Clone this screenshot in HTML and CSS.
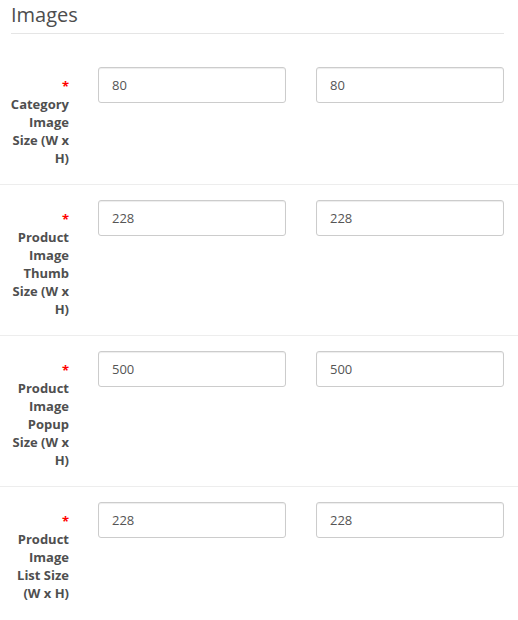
FILE: index.html
```html
<!DOCTYPE html>
<html>
<head>
<meta charset="utf-8">
<link rel="stylesheet" href="styles.css">
</head>
<body>
<fieldset class="fs">
  <legend class="legend">Images</legend>
  <div class="row first">
    <label class="lbl"><span class="req">*</span>Category<br>Image<br>Size (W x<br>H)</label>
    <input class="inp" type="text" value="80">
    <input class="inp" type="text" value="80">
  </div>
  <div class="row">
    <label class="lbl"><span class="req">*</span>Product<br>Image<br>Thumb<br>Size (W x<br>H)</label>
    <input class="inp" type="text" value="228">
    <input class="inp" type="text" value="228">
  </div>
  <div class="row">
    <label class="lbl"><span class="req">*</span>Product<br>Image<br>Popup<br>Size (W x<br>H)</label>
    <input class="inp" type="text" value="500">
    <input class="inp" type="text" value="500">
  </div>
  <div class="row">
    <label class="lbl"><span class="req">*</span>Product<br>Image<br>List Size<br>(W x H)</label>
    <input class="inp" type="text" value="228">
    <input class="inp" type="text" value="228">
  </div>
</fieldset>
</body>
</html>
```
FILE: styles.css
```css
html, body {
  margin: 0;
  padding: 0;
  background: #fff;
}
body {
  font-family: "Open Sans", "Liberation Sans", sans-serif;
  color: #555;
  overflow: hidden;
}
.fs {
  margin: 0;
  padding: 0;
  border: 0;
  min-width: 0;
}
.legend {
  display: block;
  box-sizing: border-box;
  width: 493px;
  margin: 0 0 18px 11px;
  padding: 0;
  height: 34px;
  line-height: 29px;
  font-size: 20px;
  color: #4d4d4d;
  border-bottom: 1px solid #e5e5e5;
  float: left;
}
.row {
  clear: both;
  display: grid;
  grid-template-columns: 62px 188px 188px;
  column-gap: 29px;
  align-items: start;
  padding: 15px 14px 15px 7px;
  border-top: 1px solid #ededed;
}
.row .inp + .inp {
  margin-left: 1px;
}
.row.first {
  border-top: 0;
}
.lbl {
  display: block;
  text-align: right;
  font-size: 13px;
  font-weight: bold;
  line-height: 18px;
  color: #4f4f4f;
  padding-top: 10px;
  margin-bottom: 2px;
}
.req {
  display: block;
  color: #f00;
}
.inp {
  box-sizing: border-box;
  width: 188px;
  height: 36px;
  margin: 0;
  padding: 8px 13px;
  font-family: "Open Sans", "Liberation Sans", sans-serif;
  font-size: 13px;
  color: #555;
  background: #fff;
  border: 1px solid #ccc;
  border-radius: 3px;
  box-shadow: inset 0 1px 1px rgba(0, 0, 0, 0.075);
  outline: none;
}
```
